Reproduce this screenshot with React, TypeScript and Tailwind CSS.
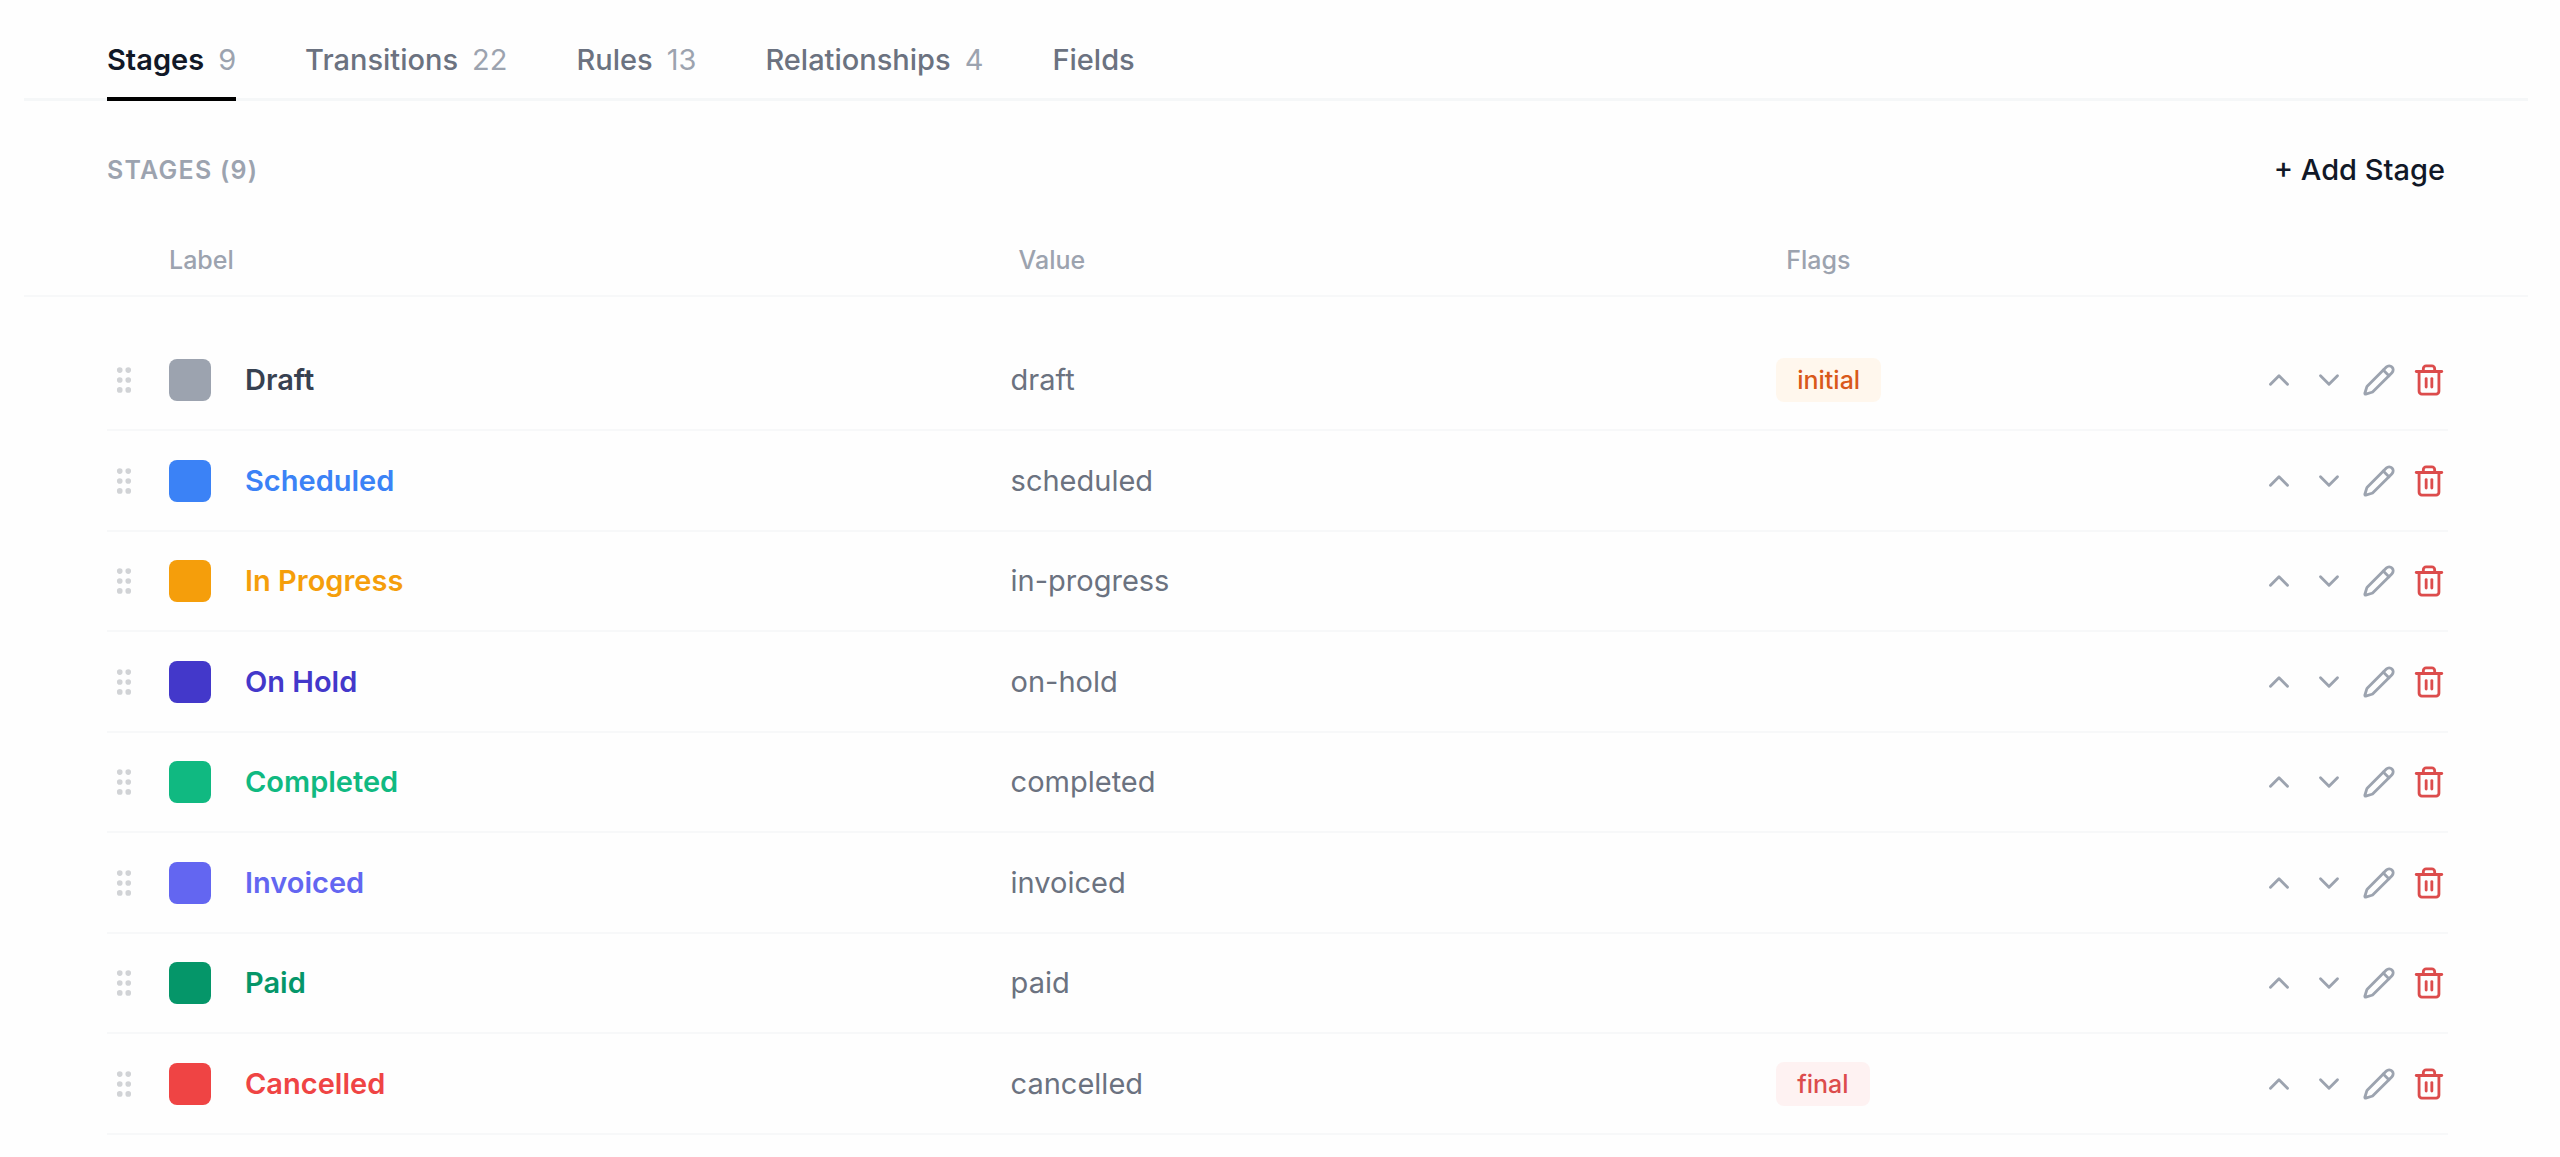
import { useState } from "react"
import { ChevronDown, ChevronUp, GripVertical, Pencil, Trash2 } from "lucide-react"
import clsx from "clsx"

type Stage = {
  label: string
  value: string
  swatch: string
  text: string
  flag?: "initial" | "final"
}

const TABS = [
  { name: "Stages", count: 9 },
  { name: "Transitions", count: 22 },
  { name: "Rules", count: 13 },
  { name: "Relationships", count: 4 },
  { name: "Fields" },
]

const STAGES: Stage[] = [
  { label: "Draft", value: "draft", swatch: "bg-[#9ca3af]", text: "text-[#374151]", flag: "initial" },
  { label: "Scheduled", value: "scheduled", swatch: "bg-[#3b82f6]", text: "text-[#3b82f6]" },
  { label: "In Progress", value: "in-progress", swatch: "bg-[#f59e0b]", text: "text-[#f59e0b]" },
  { label: "On Hold", value: "on-hold", swatch: "bg-[#4338ca]", text: "text-[#4338ca]" },
  { label: "Completed", value: "completed", swatch: "bg-[#10b981]", text: "text-[#10b981]" },
  { label: "Invoiced", value: "invoiced", swatch: "bg-[#6366f1]", text: "text-[#6366f1]" },
  { label: "Paid", value: "paid", swatch: "bg-[#059669]", text: "text-[#059669]" },
  { label: "Cancelled", value: "cancelled", swatch: "bg-[#ef4444]", text: "text-[#ef4444]", flag: "final" },
]

// grip | label | value | flags | actions
const COLS = "grid grid-cols-[62px_35fr_32fr_20fr_192px] items-center"

const Tabs = () => {
  const [active, setActive] = useState("Stages")

  return (
    <nav className="flex gap-[69px] border-b-[3px] border-[#f5f7f8] pl-[83px] pr-20 pt-9">
      {TABS.map((tab) => (
        <button
          key={tab.name}
          type="button"
          onClick={() => setActive(tab.name)}
          className={clsx(
            "-mb-[3px] flex gap-[14px] border-b-4 pb-[14px] text-[29px] leading-[47px]",
            active === tab.name
              ? "border-black font-semibold text-[#111827]"
              : "border-transparent font-medium text-[#6b7280]"
          )}
        >
          {tab.name}
          {tab.count !== undefined && (
            <span className="font-normal text-[#9ca3af]">{tab.count}</span>
          )}
        </button>
      ))}
    </nav>
  )
}

const FlagBadge = ({ flag }: { flag: "initial" | "final" }) => (
  <span
    className={clsx(
      "inline-flex h-11 items-center rounded-lg px-[21px] text-[25px] font-medium",
      flag === "initial" ? "bg-[#fff7ed] text-[#d9591a]" : "bg-[#fef2f2] text-[#dc4c4c]"
    )}
  >
    {flag}
  </span>
)

const StageRow = ({ stage }: { stage: Stage }) => (
  <tr
    className={clsx(
      COLS,
      "ml-[83px] mr-20 h-[100px] border-b-2 border-[#f7f8f9] text-[29px] leading-[42px] even:h-[101px]"
    )}
  >
    <td>
      <button type="button" aria-label={`Drag ${stage.label}`} className="block cursor-grab">
        <GripVertical size={34} className="text-[#d1d3d6]" />
      </button>
    </td>
    <td className="flex items-center gap-[34px]">
      <span className={clsx("size-[42px] rounded-lg", stage.swatch)} />
      <span className={clsx("font-semibold", stage.text)}>{stage.label}</span>
    </td>
    <td className="pl-0.5 text-[#6b7280]">{stage.value}</td>
    <td className="flex">{stage.flag && <FlagBadge flag={stage.flag} />}</td>
    <td className="flex justify-end gap-4 pr-0.5 text-[#9ca3af]">
      <button type="button" aria-label={`Move ${stage.label} up`}>
        <ChevronUp size={34} />
      </button>
      <button type="button" aria-label={`Move ${stage.label} down`}>
        <ChevronDown size={34} />
      </button>
      <button type="button" aria-label={`Edit ${stage.label}`}>
        <Pencil size={34} />
      </button>
      <button type="button" aria-label={`Delete ${stage.label}`} className="text-[#dc4c4c]">
        <Trash2 size={34} />
      </button>
    </td>
  </tr>
)

export default function App() {
  return (
    <main className="min-h-screen bg-[#fefefe] pl-6 pr-8 font-['Inter',sans-serif]">
      <Tabs />

      <div className="flex items-center justify-between px-[83px] pt-12">
        <h2 className="text-[25px] leading-[42px] font-semibold tracking-wider text-[#9ca3af] uppercase">
          Stages (9)
        </h2>
        <button type="button" className="text-[29px] leading-[42px] font-medium text-[#111827]">
          + Add Stage
        </button>
      </div>

      <table className="mt-12 block">
        <thead className="block">
          <tr
            className={clsx(
              COLS,
              "border-b-2 border-[#f7f8f9] pb-[14px] pl-[83px] pr-20 text-left text-[25px] leading-[42px] text-[#9ca3af]"
            )}
          >
            <th aria-label="Reorder" />
            <th className="font-medium">Label</th>
            <th className="pl-[10px] font-medium">Value</th>
            <th className="pl-[10px] font-medium">Flags</th>
            <th aria-label="Actions" />
          </tr>
        </thead>
        <tbody className="block pt-[34px]">
          {STAGES.map((stage) => (
            <StageRow key={stage.value} stage={stage} />
          ))}
        </tbody>
      </table>
    </main>
  )
}
